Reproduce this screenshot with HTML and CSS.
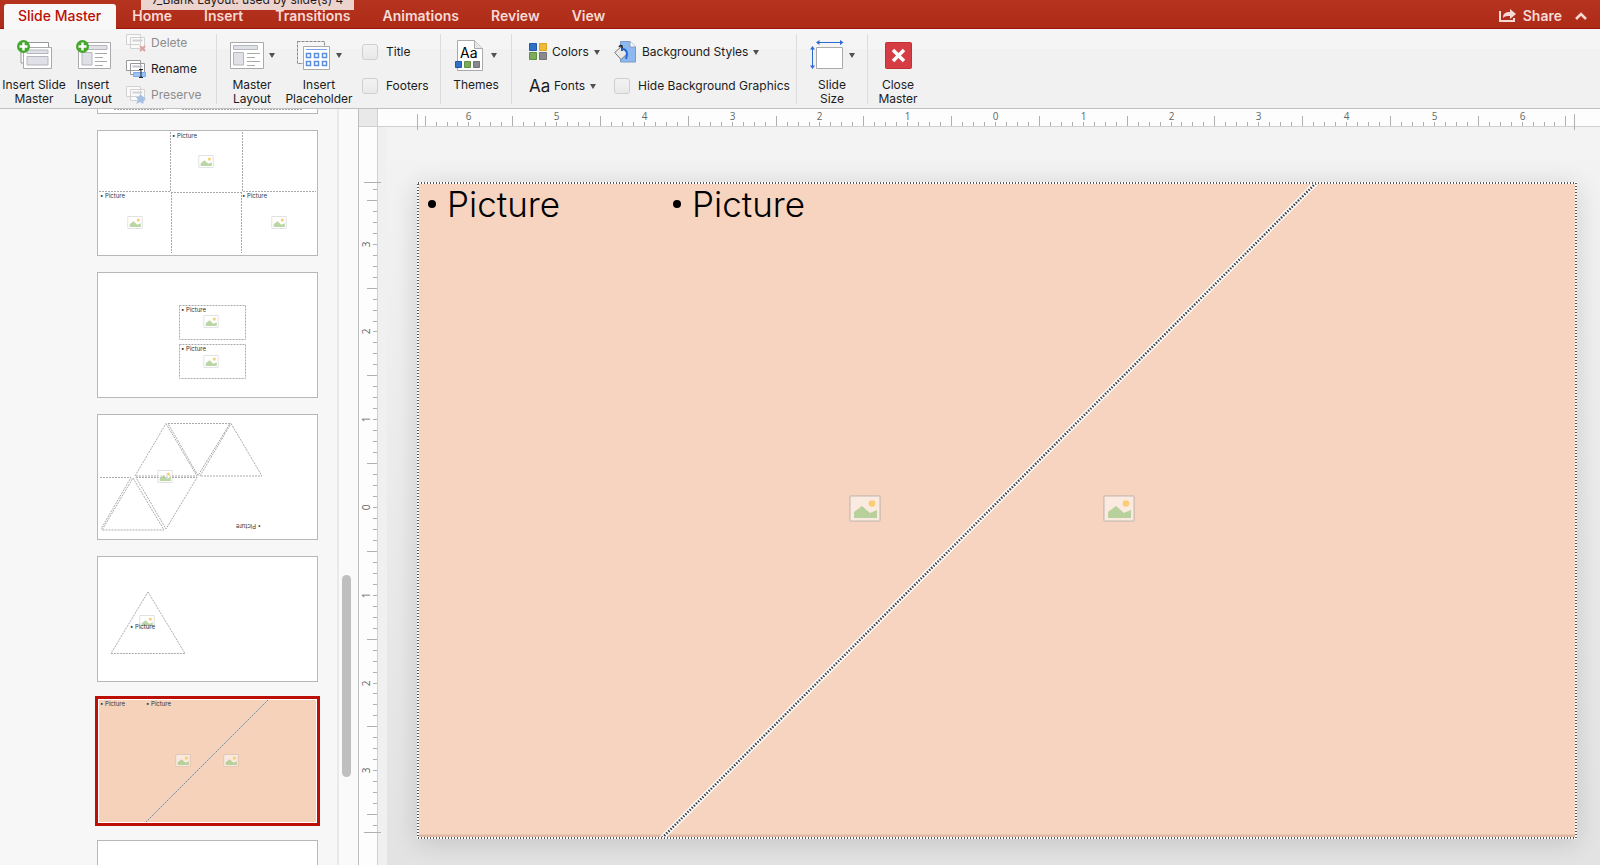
FILE: index.html
```html
<!DOCTYPE html>
<html lang="en">
<head>
    <meta charset="UTF-8">
    <meta name="viewport" content="width=device-width, initial-scale=1.0">
    <title>Slide Master</title>
    <link rel="stylesheet" href="styles.css">
</head>
<body>
    <!-- shared icons -->
    <svg class="defs" width="0" height="0">
        <symbol id="pic" viewBox="0 0 32 27">
            <rect x="1" y="1" width="30" height="25" rx="1" fill="#fff" fill-opacity=".5" stroke="#999" stroke-opacity=".4" stroke-width="1.500"/>
            <path d="M5 23v-6l8-6 8 7 7-3v8z" fill="#9bc47d" fill-opacity=".7"/>
            <circle cx="23" cy="8.500" r="3.300" fill="#f9c761" fill-opacity=".85"/>
        </symbol>
        <symbol id="caret" viewBox="0 0 6 5"><path d="M0 0h6L3 5z" fill="#505050"/></symbol>
    </svg>

    <header class="tabs">
        <nav>
            <a class="tab active" href="#">Slide Master</a>
            <a class="tab" href="#">Home</a>
            <a class="tab" href="#">Insert</a>
            <a class="tab" href="#">Transitions</a>
            <a class="tab" href="#">Animations</a>
            <a class="tab" href="#">Review</a>
            <a class="tab" href="#">View</a>
        </nav>
        <button class="share">
            <svg width="18" height="15" viewBox="0 0 18 15"><path d="M1 3v10h14V10" fill="none" stroke="#f7dad5" stroke-width="2"/><path d="M4 10c0-5 3-6 7-6V1l6 5-6 5V8C8 8 6 8 4 10z" fill="#f7dad5"/></svg>
            Share
        </button>
        <button class="collapse" aria-label="Collapse ribbon">
            <svg width="12" height="8" viewBox="0 0 12 8"><path d="M1 7l5-5 5 5" fill="none" stroke="#f7dad5" stroke-width="2.500"/></svg>
        </button>
        <div class="tooltip">7_Blank Layout: used by slide(s) 4</div>
    </header>

    <div class="ribbon">
        <button class="big wide">
            <span class="icon">
                <svg width="37" height="31" viewBox="0 0 37 31">
                    <path d="M5 2.500h27.500V23H5z" fill="#fff" stroke="#999"/>
                    <path d="M7.500 7.500h28v21h-28z" fill="#fff" stroke="#aaa"/>
                    <path d="M11 10h21v3.500H11zM11 16.500h21V25H11z" fill="#dfe1e6" stroke="#b4b7be"/>
                    <circle cx="7.500" cy="6.500" r="6.500" fill="#45a72c"/><path d="M3.500 6.500h8M7.500 2.500v8" stroke="#fff" stroke-width="2.400"/>
                </svg>
            </span>
            Insert Slide<br>Master
        </button>
        <button class="big narrow">
            <span class="icon">
                <svg width="37" height="31" viewBox="0 0 37 31">
                    <path d="M3.500 2.500h32v26h-32z" fill="#fff" stroke="#aaa"/>
                    <path d="M7 5.500h25v4H7zM7 12.500h10V25H7z" fill="#dfe1e6" stroke="#b4b7be"/>
                    <path d="M20 13.500h12M20 17.500h8M20 21.500h12M20 25.500h8" stroke="#aaa"/>
                    <circle cx="7.500" cy="6.500" r="6.500" fill="#45a72c"/><path d="M3.500 6.500h8M7.500 2.500v8" stroke="#fff" stroke-width="2.400"/>
                </svg>
            </span>
            Insert<br>Layout
        </button>
        <div class="stack">
            <button class="row" disabled>
                <svg width="20" height="18" viewBox="0 0 20 18">
                    <path d="M.5.500h14v10H.5zM4.500 3.500h14v11h-14z" fill="#fafafa" stroke="#d2d2d2"/><path d="M6.500 6.500h10" stroke="#d2d2d2" stroke-width="2"/>
                    <path d="M14 12l5 5M19 12l-5 5" stroke="#e0a0a0" stroke-width="2"/>
                </svg>
                Delete
            </button>
            <button class="row">
                <svg width="20" height="18" viewBox="0 0 20 18">
                    <path d="M.5.500h14v10H.5zM4.500 3.500h14v11h-14z" fill="#fff" stroke="#999"/><path d="M6.500 6.500h10" stroke="#c0c4cc" stroke-width="2"/>
                    <path d="M7.500 12.500h12v4h-12z" fill="#9dc3f5" stroke="#79a9e8"/><path d="M13 9.500h4M15 9.500v8M13 17.500h4" stroke="#222"/>
                </svg>
                Rename
            </button>
            <button class="row" disabled>
                <svg width="20" height="18" viewBox="0 0 20 18">
                    <path d="M.5.500h14v10H.5zM4.500 3.500h14v11h-14z" fill="#fafafa" stroke="#d2d2d2"/><path d="M6.500 6.500h10" stroke="#d2d2d2" stroke-width="2"/>
                    <path d="M14 8l6 5-2 1-1 4-3-2-4 2 2-4-2-3 3 0z" fill="#a5c0e4"/>
                </svg>
                Preserve
            </button>
        </div>

        <span class="divider"></span>
        <button class="big master">
            <span class="icon">
                <svg width="34" height="31" viewBox="0 0 34 31">
                    <path d="M.5 2.500h33v26H.5z" fill="#fff" stroke="#aaa"/>
                    <path d="M3.500 5.500h24v4h-24zM3.500 12.500h10V25h-10z" fill="#dfe1e6" stroke="#b4b7be"/>
                    <path d="M17 13.500h13M17 17.500h8M17 21.500h13M17 25.500h8" stroke="#aaa"/>
                </svg>
                <svg class="caret"><use href="#caret"/></svg>
            </span>
            Master<br>Layout
        </button>
        <button class="big wide">
            <span class="icon">
                <svg width="34" height="31" viewBox="0 0 34 31">
                    <path d="M.5 1.500h27v22H.5z" fill="#f6f6f6" stroke="#888" stroke-dasharray="3 1"/>
                    <path d="M6.500 6.500h26v23h-26z" fill="#fff" stroke="#aaa"/><path d="M9 9.500h21" stroke="#78a3e8"/>
                    <path d="M9.500 13.500h4v4h-4zM17.500 13.500h4v4h-4zM25.500 13.500h4v4h-4zM9.500 21.500h4v4h-4zM17.500 21.500h4v4h-4zM25.500 21.500h4v4h-4z" fill="#fff" stroke="#5b8fe0" stroke-width="1.500"/>
                </svg>
                <svg class="caret"><use href="#caret"/></svg>
            </span>
            Insert<br>Placeholder
        </button>
        <div class="checks">
            <label><input type="checkbox">Title</label>
            <label><input type="checkbox">Footers</label>
        </div>

        <span class="divider"></span>
        <button class="big">
            <span class="icon themes">
                <svg width="29" height="31" viewBox="0 0 29 31">
                    <path d="M2.500.500h17l8 8v22h-25z" fill="#fff" stroke="#aaa"/><path d="M19.500.500v8h8" fill="#e6e6e6" stroke="#aaa"/>
                    <text x="5" y="18" class="theme-aa">Aa</text>
                    <path d="M.5 21.500h6v6h-6z" fill="#2f70c9" stroke="#2159a6"/><path d="M9.500 21.500h6v6h-6z" fill="#7dab5b" stroke="#5f9140"/><path d="M18.500 21.500h6v6h-6z" fill="#888a8f" stroke="#707277"/>
                </svg>
                <svg class="caret"><use href="#caret"/></svg>
            </span>
            Themes
        </button>

        <span class="divider"></span>
        <div class="styles">
            <button class="row">
                <svg width="18" height="18" viewBox="0 0 18 18">
                    <path d="M.5.500h7v7h-7z" fill="#2f70c9" stroke="#2159a6"/><path d="M10.500.500h7v7h-7z" fill="#efbb36" stroke="#d9a31f"/>
                    <path d="M.5 9.500h7v7h-7z" fill="#7dab5b" stroke="#5f9140"/><path d="M10.500 9.500h7v7h-7z" fill="#888a8f" stroke="#707277"/>
                </svg>
                Colors <svg class="caret"><use href="#caret"/></svg>
            </button>
            <button class="row">
                <svg width="23" height="22" viewBox="0 0 23 22">
                    <path d="M6.500.500H16l5.500 5.500v15h-15z" fill="#8db8f0" stroke="#7a9bc8"/><path d="M16 .500V6h5.500" fill="#fff" stroke="#8a9bb0"/>
                    <path d="M.7 11.500l6.800-6 6 7-6.500 6z" fill="#e9e9e9" stroke="#777"/><path d="M8 10V4.500M5 6c1-2 3-2 3 0" fill="none" stroke="#222" stroke-width="1.500"/>
                    <path d="M8 8c5 0 6 4 4 10" fill="none" stroke="#2368d8" stroke-width="2"/>
                </svg>
                Background Styles <svg class="caret"><use href="#caret"/></svg>
            </button>
            <button class="row">
                <span class="aa">Aa</span>
                Fonts <svg class="caret"><use href="#caret"/></svg>
            </button>
            <label><input type="checkbox">Hide Background Graphics</label>
        </div>

        <span class="divider"></span>
        <button class="big">
            <span class="icon">
                <svg width="34" height="31" viewBox="0 0 34 31">
                    <path d="M6.500 7.500h26v21h-26z" fill="#fff" stroke="#aaa"/>
                    <path d="M7 2.500h26M2.500 7v21" stroke="#2c6bd1"/><path d="M6 2.500L9.500 0v5zM33.500 2.500L30 0v5zM2.500 6L0 9.500h5zM2.500 29L0 25.500h5z" fill="#2c6bd1"/>
                </svg>
                <svg class="caret"><use href="#caret"/></svg>
            </span>
            Slide<br>Size
        </button>
        <span class="divider"></span>
        <button class="big close">
            <span class="icon">
                <svg width="27" height="31" viewBox="0 0 27 31">
                    <rect x=".5" y="2.500" width="26" height="26" rx="1" fill="#d63c44" stroke="#c12f37"/><path d="M8 10l11 11M19 10L8 21" stroke="#fff" stroke-width="3.500"/>
                </svg>
            </span>
            Close<br>Master
        </button>
    </div>

    <main class="work">
        <aside class="thumbs">
            <svg class="thumb" viewBox="0 0 221 126">
                <path class="dash" d="M17 121.500h50M85 121.500h58M155 121.500h50"/>
            </svg>
            <svg class="thumb" viewBox="0 0 221 126">
                <path class="dash" d="M73.500 2v60M145.500 2v60M2 61.500h72M146 61.500h73M74 62.500h70M74.500 62v61M144.500 62v61"/>
                <use href="#pic" x="101" y="25" width="16" height="13"/>
                <use href="#pic" x="30" y="86" width="16" height="13"/>
                <use href="#pic" x="174" y="86" width="16" height="13"/>
                <text x="75" y="8">• Picture</text>
                <text x="3" y="68">• Picture</text>
                <text x="145" y="68">• Picture</text>
            </svg>
            <svg class="thumb" viewBox="0 0 221 126">
                <path class="dash" d="M82.500 33.500h66v34h-66zM82.500 72.500h66v34h-66z"/>
                <use href="#pic" x="106" y="43" width="16" height="13"/>
                <use href="#pic" x="106" y="83" width="16" height="13"/>
                <text x="84" y="40">• Picture</text>
                <text x="84" y="79">• Picture</text>
            </svg>
            <svg class="thumb" viewBox="0 0 221 126">
                <path class="dash" d="M69 9.500l31 52.500H38zM71 9.500h62l-32 52zM134 9.500l31 52.500h-62zM3 63.500h31L4 115M36 64l31 52H5zM39 63.500h61L69 115z"/>
                <use href="#pic" x="60" y="56" width="16" height="13"/>
                <text x="-164" y="-110" transform="rotate(180)">• Picture</text>
            </svg>
            <svg class="thumb" viewBox="0 0 221 126">
                <path class="dash" d="M51 36l37 61.500H14z"/>
                <use href="#pic" x="42" y="59" width="16" height="13"/>
                <text x="33" y="73">• Picture</text>
            </svg>
            <svg class="thumb selected" viewBox="0 0 221 126">
                <rect x="2" y="2" width="217" height="122" fill="#f6d2ba"/>
                <path d="M171 2L49 124" stroke="#e6d5cb" stroke-width="2"/><path d="M171 2L49 124" stroke="#888" stroke-dasharray="2 1"/>
                <use href="#pic" x="78" y="56" width="16" height="13"/>
                <use href="#pic" x="126" y="56" width="16" height="13"/>
                <text x="3" y="8">• Picture</text>
                <text x="49" y="8">• Picture</text>
            </svg>
            <svg class="thumb" viewBox="0 0 221 126"></svg>
        </aside>
        <div class="scroll"><span class="handle"></span></div>

        <section class="editor">
            <div class="corner"></div>
            <div class="ruler-h">
                <svg id="rulerH" viewBox="0 0 1158 22"></svg>
            </div>
            <div class="ruler-v">
                <svg id="rulerV" viewBox="0 0 26 652"></svg>
            </div>
            <div class="canvas">
                <div class="slide">
                    <svg class="diagonal" viewBox="0 0 1160 657">
                        <path d="M0 654H1160" stroke="#dfb9a3" stroke-width="3"/>
                        <path d="M899 1L245 656" stroke="#fff" stroke-width="5"/>
                        <path d="M899 1L245 656" stroke="#444" stroke-width="2.500" stroke-dasharray="1.500 1.500"/>
                        <path d="M1 1h1158v655H1z" fill="none" stroke="#fff" stroke-width="2"/>
                        <path d="M1 1h1158v655H1z" fill="none" stroke="#555" stroke-width="2" stroke-dasharray="1 2"/>
                    </svg>
                    <p class="holder">Picture</p>
                    <p class="holder second">Picture</p>
                    <svg class="pic left"><use href="#pic"/></svg>
                    <svg class="pic right"><use href="#pic"/></svg>
                </div>
            </div>
        </section>
    </main>
    <script>
        // one inch is eight ticks, with a longer tick on the half inch
        const step = 10.97;

        function tick(i, end) {
            if (i % 8 === 0 || i % 4 !== 0) return [end - 4, end];
            return [end - 10, end];
        }

        let h = '<path class="edge" d="M.5 5v16M1157.500 5v16"/>';
        for (let i = -52; i <= 52; i++) {
            const x = Math.round(578 + i * step) + 0.5;
            const t = tick(i, 17);
            h += `<path d="M${x} ${t[0]}V${t[1]}"/>`;
            if (i % 8 === 0) h += `<text x="${x}" y="11">${Math.abs(i / 8)}</text>`;
        }
        document.getElementById('rulerH').innerHTML = h;

        let v = '<path class="edge" d="M5 .5h17M5 650.500h17"/>';
        for (let i = -29; i <= 29; i++) {
            const y = Math.round(325 + i * step) + 0.5;
            const t = tick(i, 18);
            v += `<path d="M${t[0]} ${y}H${t[1]}"/>`;
            if (i % 8 === 0) v += `<text transform="translate(11 ${y}) rotate(-90)">${Math.abs(i / 8)}</text>`;
        }
        document.getElementById('rulerV').innerHTML = v;
    </script>
</body>
</html>
```
FILE: styles.css
```css
* {
    box-sizing: border-box;
}
body {
    margin: 0;
    height: 100vh;
    display: flex;
    flex-direction: column;
    overflow: hidden;
    font-family: Inter, "Liberation Sans", sans-serif;
    font-size: 12px;
    line-height: 14px;
    color: #1c1c1c;
    background-color: #f1f1f1;
}
button {
    border: none;
    background: none;
    padding: 0;
    margin: 0;
    font: inherit;
    color: inherit;
    cursor: pointer;
}
svg {
    display: block;
    flex: none;
}
.defs {
    position: absolute;
}

/* tab bar */
.tabs {
    position: relative;
    flex: none;
    height: 29px;
    display: flex;
    padding: 0 13px 0 4px;
    background: linear-gradient(#b53420, #ad2a16);
    border-bottom: 1px solid #9c1408;
}
.tabs nav {
    display: flex;
    flex: 1;
}
.tab {
    height: 29px;
    padding: 4px 16px 0;
    font-size: 14px;
    line-height: 24px;
    font-weight: 600;
    color: #f7dad5;
    text-decoration: none;
}
.tab.active {
    height: 25px;
    margin-top: 4px;
    padding: 0 15px 0 14px;
    font-weight: 500;
    color: #bd0f06;
    background-color: #f8f8f8;
    border-radius: 3px 3px 0 0;
}
.share {
    display: flex;
    align-items: center;
    gap: 6px;
    padding-top: 3px;
    font-size: 14px;
    font-weight: 600;
    color: #f7dad5;
}
.collapse {
    margin-left: 13px;
    padding-top: 3px;
}
.tooltip {
    position: absolute;
    left: 141px;
    top: 0;
    width: 213px;
    height: 10px;
    overflow: hidden;
    line-height: 0;
    text-align: center;
    white-space: nowrap;
    background-color: #ecd3ce;
}

/* ribbon */
.ribbon {
    flex: none;
    height: 80px;
    display: flex;
    align-items: flex-start;
    background: linear-gradient(#f5f5f5 20px, #f1f1f1 20px);
    border-bottom: 1px solid #c0c0c0;
    white-space: nowrap;
}
.big {
    width: 70px;
    padding-top: 11px;
    text-align: center;
}
.big.wide {
    width: 68px;
}
.big.narrow {
    width: 50px;
}
.big.master {
    width: 66px;
    margin-left: 2px;
}
.big.close {
    width: 60px;
}
.icon {
    display: flex;
    align-items: center;
    justify-content: center;
    gap: 5px;
    height: 31px;
    margin-bottom: 7px;
}
.icon.themes {
    gap: 7px;
}
.caret {
    width: 6px;
    height: 5px;
}
.stack {
    width: 98px;
    padding: 1px 0 0 8px;
}
.row {
    display: flex;
    align-items: center;
    gap: 5px;
    height: 26px;
}
.row:disabled {
    color: #8c8c8c;
}
.divider {
    width: 1px;
    height: 70px;
    margin-top: 5px;
    background-color: #dcdcdc;
}
.checks {
    width: 87px;
    padding: 10px 0 0 9px;
    display: grid;
    gap: 8px;
}
label {
    display: flex;
    align-items: center;
    gap: 8px;
    height: 26px;
}
input[type="checkbox"] {
    appearance: none;
    width: 16px;
    height: 16px;
    margin: 0;
    border: 1px solid #cfcfcf;
    border-radius: 3px;
    background: linear-gradient(#f2f2f2, #e9e9e9);
}
.styles {
    width: 284px;
    padding: 10px 0 0 17px;
    display: grid;
    grid-template-columns: 85px auto;
    justify-content: start;
    gap: 8px 0;
}
.aa {
    width: 20px;
    font-size: 17px;
}
.theme-aa {
    font-size: 14px;
}

/* layout list */
.work {
    flex: 1;
    min-height: 0;
    display: flex;
}
.thumbs {
    flex: none;
    width: 337px;
    padding-left: 97px;
    overflow: hidden;
    background-color: #f7f7f7;
}
.thumb {
    width: 221px;
    height: 126px;
    margin-bottom: 16px;
    background-color: #fff;
    outline: 1px solid #b8b8b8;
    outline-offset: -1px;
}
.thumb:first-child {
    margin-top: -121px;
}
.thumb.selected {
    outline: 3px solid #bd0f06;
    outline-offset: -1px;
}
.thumb text {
    font-size: 6px;
    fill: #333;
}
.dash {
    fill: none;
    stroke: #aaa;
    stroke-width: 1;
    stroke-dasharray: 2 1;
}
.scroll {
    flex: none;
    width: 22px;
    padding: 466px 0 0 3px;
    background-color: #fafafa;
    border-left: 2px solid #e9e9e9;
    border-right: 1px solid #bfbfbf;
}
.handle {
    display: block;
    width: 9px;
    height: 202px;
    border-radius: 5px;
    background-color: #bfbfbf;
}

/* rulers and slide */
.editor {
    flex: 1;
    min-width: 0;
    display: grid;
    grid-template: 18px 1fr / 19px 1fr;
}
.corner {
    background-color: #e9e9e9;
    border-right: 1px solid #d0d0d0;
    border-bottom: 1px solid #d0d0d0;
}
.ruler-h {
    padding: 0 25px 0 39px;
    background-color: #fdfdfd;
    border-bottom: 1px solid #d0d0d0;
}
.ruler-v {
    padding-top: 55px;
    background-color: #fdfdfd;
    border-right: 1px solid #d0d0d0;
}
.ruler-h svg {
    position: relative;
    z-index: 1;
    width: 100%;
}
.ruler-v svg {
    position: relative;
    z-index: 1;
    width: 26px;
}
#rulerH path, #rulerV path {
    stroke: #b0b0b0;
}
#rulerH text, #rulerV text {
    font-family: "Open Sans", sans-serif;
    font-size: 10px;
    text-anchor: middle;
    fill: #666;
}
.canvas {
    min-width: 0;
    overflow: hidden;
    padding: 55px 23px 0 30px;
    border-left: 9px solid transparent;
    background: linear-gradient(#f3f3f3, #e3e3e3) padding-box, #f0f0f0;
}
.slide {
    position: relative;
    aspect-ratio: 1160 / 657;
    background-color: #f6d4c0;
    box-shadow: 0 4px 24px rgba(0, 0, 0, 0.14);
}
.diagonal {
    width: 100%;
}
.holder {
    position: absolute;
    left: 11px;
    top: 0;
    margin: 0;
    display: flex;
    align-items: center;
    gap: 11px;
    font-size: 35px;
    line-height: 44px;
    font-weight: 300;
    color: #000;
}
.holder::before {
    content: "";
    width: 8px;
    height: 8px;
    border-radius: 50%;
    background-color: #000;
}
.holder.second {
    left: 256px;
}
.pic {
    position: absolute;
    top: 313px;
    width: 32px;
    height: 27px;
}
.pic.left {
    left: 432px;
}
.pic.right {
    left: 686px;
}
```
